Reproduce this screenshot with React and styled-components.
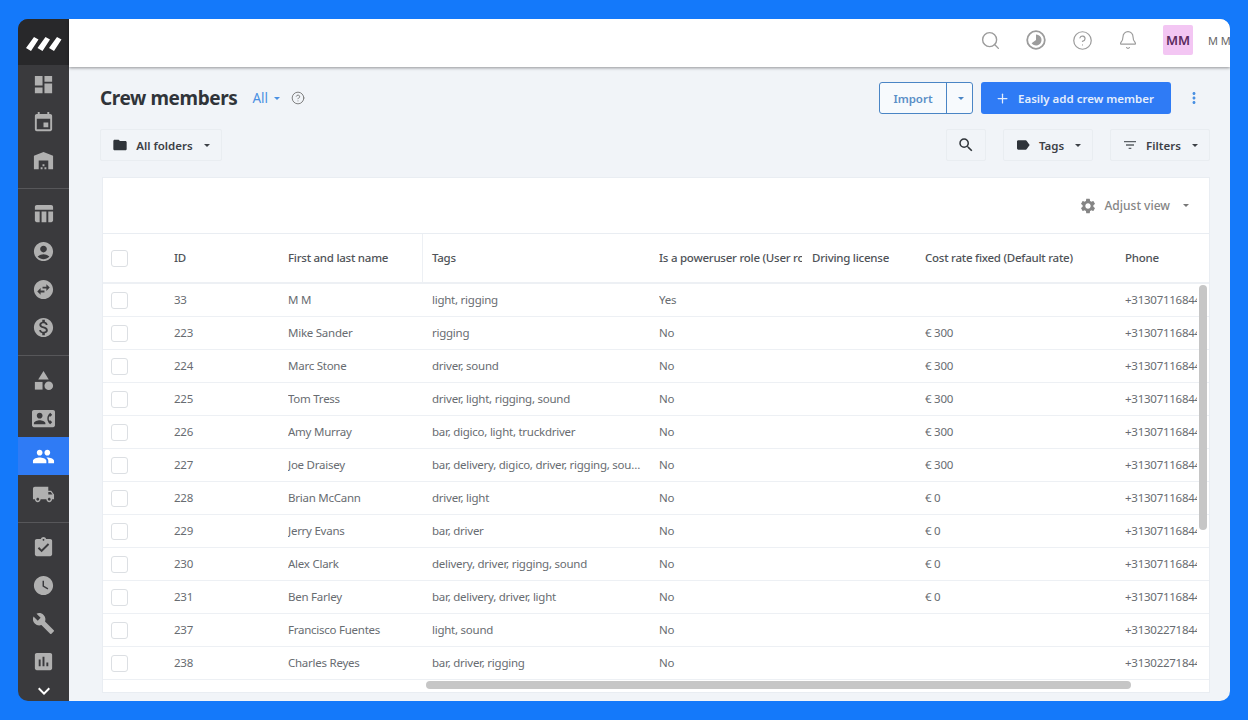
import React from 'react';
import styled, { createGlobalStyle } from 'styled-components';
import {
  MdDashboard, MdEvent, MdWarehouse, MdTableChart, MdAccountCircle, MdSwapHorizontalCircle,
  MdMonetizationOn, MdCategory, MdContactPhone, MdPeople, MdLocalShipping, MdAssignmentTurnedIn,
  MdWatchLater, MdBuild, MdAssessment, MdExpandMore, MdFolder, MdLabel, MdFilterList, MdSettings,
  MdMoreVert, MdSearch,
} from 'react-icons/md';
import { Search, CircleHelp, Bell, Plus } from 'lucide-react';

const navGroups = [
  [[MdDashboard], [MdEvent], [MdWarehouse]],
  [[MdTableChart], [MdAccountCircle], [MdSwapHorizontalCircle], [MdMonetizationOn]],
  [[MdCategory], [MdContactPhone], [MdPeople, true], [MdLocalShipping]],
  [[MdAssignmentTurnedIn], [MdWatchLater], [MdBuild], [MdAssessment]],
];

const P1 = '+31307116844';
const P2 = '+31302271844';
const rows = [
  ['33', 'M M', 'light, rigging', 'Yes', '', P1],
  ['223', 'Mike Sander', 'rigging', 'No', '€ 300', P1],
  ['224', 'Marc Stone', 'driver, sound', 'No', '€ 300', P1],
  ['225', 'Tom Tress', 'driver, light, rigging, sound', 'No', '€ 300', P1],
  ['226', 'Amy Murray', 'bar, digico, light, truckdriver', 'No', '€ 300', P1],
  ['227', 'Joe Draisey', 'bar, delivery, digico, driver, rigging, sound', 'No', '€ 300', P1],
  ['228', 'Brian McCann', 'driver, light', 'No', '€ 0', P1],
  ['229', 'Jerry Evans', 'bar, driver', 'No', '€ 0', P1],
  ['230', 'Alex Clark', 'delivery, driver, rigging, sound', 'No', '€ 0', P1],
  ['231', 'Ben Farley', 'bar, delivery, driver, light', 'No', '€ 0', P1],
  ['237', 'Francisco Fuentes', 'light, sound', 'No', '', P2],
  ['238', 'Charles Reyes', 'bar, driver, rigging', 'No', '', P2],
];

function App() {
  return (
    <>
      <Global />
      <Frame>
        <Sidebar>
          <Logo>
            <svg width="36" height="14" viewBox="0 0 36 14">
              <path d="M0 11L8 0l4.500 2.500L5 14zM11.500 11L19.500 0l4.500 2.500L16.500 14zM23 11L31 0l4.500 2.500L28 14z" fill="#fff" />
            </svg>
          </Logo>
          {navGroups.map((group, i) => (
            <NavGroup key={i}>
              {group.map(([Icon, active], j) => (
                <NavItem key={j} $active={active}><Icon size={23} /></NavItem>
              ))}
            </NavGroup>
          ))}
          <More><MdExpandMore size={24} /></More>
        </Sidebar>
        <Main>
          <TopBar>
            <TopIcon><Search size={21} strokeWidth={1.6} /></TopIcon>
            <TopIcon>
              <svg width="20" height="20" viewBox="0 0 20 20">
                <circle cx="10" cy="10" r="8.8" fill="none" stroke="#9c9c9c" strokeWidth="1.8" />
                <path d="M10 4.500a5.500 5.500 0 1 1 -4.400 8.800l4.400-3.300z" fill="#9c9c9c" />
              </svg>
            </TopIcon>
            <TopIcon><CircleHelp size={21} strokeWidth={1.4} /></TopIcon>
            <TopIcon><Bell size={20} strokeWidth={1.4} /></TopIcon>
            <Avatar>MM</Avatar>
            <UserName>M M</UserName>
          </TopBar>
          <Content>
            <TitleRow>
              <Title>Crew members</Title>
              <AllLink>All<Caret $color="#4a90e2" /></AllLink>
              <HelpMark><CircleHelp size={14} strokeWidth={1.6} /></HelpMark>
              <Spacer />
              <ImportGroup>
                <ImportMain>Import</ImportMain>
                <ImportDrop><Caret $color="#4a85c5" /></ImportDrop>
              </ImportGroup>
              <AddButton><Plus size={15} strokeWidth={2} />Easily add crew member</AddButton>
              <Kebab><MdMoreVert size={18} /></Kebab>
            </TitleRow>
            <FilterRow>
              <FilterButton $w={122}><MdFolder size={16} color="#2f343a" />All folders<Caret /></FilterButton>
              <Spacer />
              <FilterButton $w={40}><MdSearch size={18} color="#2f343a" /></FilterButton>
              <FilterButton $w={90} $ml={17}><MdLabel size={16} color="#2f343a" />Tags<Caret /></FilterButton>
              <FilterButton $w={100} $ml={17}><MdFilterList size={16} color="#5c6166" />Filters<Caret /></FilterButton>
            </FilterRow>
            <Panel>
              <PanelBar>
                <AdjustView><MdSettings size={18} />Adjust view<Caret $color="#777" $ml={6} /></AdjustView>
              </PanelBar>
              <HeadRow>
                <CheckCell><Check /></CheckCell>
                <Cell>ID</Cell>
                <Cell>First and last name</Cell>
                <HeadTags>Tags</HeadTags>
                <Cell>Is a poweruser role (User role)</Cell>
                <Cell>Driving license</Cell>
                <Cell>Cost rate fixed (Default rate)</Cell>
                <Cell>Phone</Cell>
              </HeadRow>
              <Body>
                {rows.map((r) => (
                  <Row key={r[0]}>
                    <CheckCell><Check /></CheckCell>
                    <Cell>{r[0]}</Cell>
                    <Cell>{r[1]}</Cell>
                    <TagsCell>{r[2]}</TagsCell>
                    <Cell>{r[3]}</Cell>
                    <Cell />
                    <Cell>{r[4]}</Cell>
                    <Cell>{r[5]}</Cell>
                  </Row>
                ))}
              </Body>
              <VScroll />
              <HScroll />
            </Panel>
          </Content>
        </Main>
      </Frame>
    </>
  );
}

const Global = createGlobalStyle`
  html, body {
    margin: 0;
    background: #1479fa;
  }
  * {
    box-sizing: border-box;
  }
`;
const Frame = styled.div`
  display: flex;
  width: 1212px;
  height: 682px;
  margin: 19px 18px;
  border-radius: 10px;
  overflow: hidden;
  font-family: "Noto Sans", sans-serif;
`;
const Sidebar = styled.nav`
  width: 51px;
  flex: none;
  display: flex;
  flex-direction: column;
  background: #3a3a3d;
  overflow: hidden;
`;
const Logo = styled.div`
  height: 46px;
  flex: none;
  display: flex;
  align-items: center;
  justify-content: center;
  padding-top: 3px;
  background: #28282a;
`;
const NavGroup = styled.div`
  flex: none;
  padding: 5px 0 9px;
  border-bottom: 1px solid #57575a;
  &:nth-of-type(2) {
    padding-top: 0;
  }
  &:nth-of-type(5) {
    border-bottom: 0;
    padding-bottom: 0;
  }
`;
const NavItem = styled.div`
  height: 38px;
  display: flex;
  align-items: center;
  justify-content: center;
  background: ${(p) => (p.$active ? '#2f7bf5' : 'transparent')};
  color: ${(p) => (p.$active ? '#fff' : '#b0b0b0')};
`;
const More = styled.div`
  height: 21px;
  flex: none;
  display: flex;
  align-items: center;
  justify-content: center;
  color: #fff;
  margin-top: auto;
`;
const Main = styled.div`
  flex: 1;
  min-width: 0;
  display: flex;
  flex-direction: column;
  background: #f1f4f8;
`;
const TopBar = styled.header`
  height: 48px;
  flex: none;
  display: flex;
  align-items: center;
  justify-content: flex-end;
  padding-bottom: 6px;
  background: #fff;
  box-shadow: 0 1px 3px rgba(0, 0, 0, 0.4);
  position: relative;
  overflow: hidden;
`;
const TopIcon = styled.div`
  width: 46px;
  display: flex;
  justify-content: center;
  color: #9c9c9c;
`;
const Avatar = styled.div`
  width: 30px;
  height: 30px;
  margin-left: 12px;
  display: flex;
  align-items: center;
  justify-content: center;
  background: #f3c6f3;
  color: #5b2a5e;
  font-size: 13px;
  font-weight: 600;
  border-radius: 2px;
`;
const UserName = styled.div`
  width: 37px;
  flex: none;
  padding-left: 15px;
  font-size: 11px;
  color: #666;
  white-space: nowrap;
`;
const Content = styled.main`
  flex: 1;
  min-height: 0;
  display: flex;
  flex-direction: column;
  padding: 15px 20px 8px 31px;
`;
const TitleRow = styled.div`
  display: flex;
  align-items: center;
  height: 32px;
  flex: none;
`;
const Title = styled.h1`
  margin: 0;
  font-size: 19px;
  font-weight: 700;
  color: #30343a;
  letter-spacing: -0.4px;
`;
const AllLink = styled.span`
  margin-left: 15px;
  display: flex;
  align-items: center;
  gap: 3px;
  font-size: 13.5px;
  color: #4a90e2;
`;
const HelpMark = styled.span`
  margin-left: 11px;
  display: flex;
  color: #777;
`;
const Spacer = styled.div`
  flex: 1;
`;
const ImportGroup = styled.div`
  display: flex;
  height: 32px;
  border: 1px solid #4a85c5;
  border-radius: 3px;
  background: #f7fafd;
  font-size: 11.5px;
  font-weight: 600;
  color: #5a8fc7;
`;
const ImportMain = styled.div`
  width: 67px;
  display: flex;
  align-items: center;
  justify-content: center;
  border-right: 1px solid #4a85c5;
`;
const ImportDrop = styled.div`
  width: 25px;
  display: flex;
  align-items: center;
  justify-content: center;
`;
const AddButton = styled.div`
  width: 190px;
  height: 32px;
  margin-left: 8px;
  padding-left: 14px;
  display: flex;
  align-items: center;
  gap: 8px;
  background: #2f7bf5;
  border-radius: 3px;
  color: #e4eefc;
  font-size: 11.5px;
  font-weight: 600;
`;
const Kebab = styled.div`
  width: 30px;
  margin-left: 8px;
  margin-right: 1px;
  display: flex;
  justify-content: center;
  color: #4a90e2;
`;
const FilterRow = styled.div`
  display: flex;
  align-items: center;
  margin-top: 15px;
  height: 32px;
  flex: none;
`;
const FilterButton = styled.div`
  width: ${(p) => p.$w}px;
  height: 32px;
  margin-left: ${(p) => p.$ml || 0}px;
  display: flex;
  align-items: center;
  justify-content: center;
  gap: 8px;
  border: 1px solid #e9edf1;
  border-radius: 2px;
  color: #3c4046;
  font-size: 11.5px;
  font-weight: 600;
`;
const Caret = styled.i`
  width: 0;
  height: 0;
  margin-left: ${(p) => p.$ml || 3}px;
  border-left: 3px solid transparent;
  border-right: 3px solid transparent;
  border-top: 3px solid ${(p) => p.$color || '#3c4046'};
`;
const Panel = styled.section`
  position: relative;
  flex: 1;
  min-height: 0;
  margin: 16px 0 0 2px;
  background: #fff;
  border: 1px solid #e9edf2;
  overflow: hidden;
`;
const PanelBar = styled.div`
  height: 56px;
  display: flex;
  justify-content: flex-end;
  align-items: center;
  padding-right: 20px;
  border-bottom: 1px solid #e9edf2;
`;
const AdjustView = styled.div`
  display: flex;
  align-items: center;
  gap: 7px;
  font-size: 12px;
  font-weight: 500;
  color: #858585;
`;
const columns = '71px 114px 144px 227px 153px 113px 200px 72px';
const HeadRow = styled.div`
  display: grid;
  grid-template-columns: ${columns};
  height: 50px;
  align-items: stretch;
  border-bottom: 2px solid #edf0f4;
  font-size: 11.5px;
  font-weight: 500;
  color: #4f5358;
  letter-spacing: -0.25px;
`;
const Body = styled.div`
  overflow: hidden;
`;
const Row = styled.div`
  display: grid;
  grid-template-columns: ${columns};
  height: 33px;
  align-items: stretch;
  border-bottom: 1px solid #edf0f4;
  font-size: 11.5px;
  color: #686c71;
  letter-spacing: -0.25px;
`;
const Cell = styled.div`
  align-self: center;
  margin-right: 10px;
  margin-bottom: 2px;
  white-space: nowrap;
  overflow: hidden;
  &:last-child {
    margin-right: 0;
  }
`;
const TagsCell = styled(Cell)`
  margin-right: 16px;
  text-overflow: ellipsis;
`;
const HeadTags = styled.div`
  display: flex;
  align-items: center;
  margin-left: -10px;
  padding-left: 9px;
  padding-bottom: 2px;
  border-left: 1px solid #edf0f4;
`;
const CheckCell = styled.div`
  display: flex;
  align-items: center;
  padding-left: 8px;
`;
const Check = styled.div`
  width: 17px;
  height: 17px;
  border: 1.5px solid #dcdfe3;
  border-radius: 3px;
  background: #fff;
`;
const VScroll = styled.div`
  position: absolute;
  top: 107px;
  right: 2px;
  width: 8px;
  height: 245px;
  border-radius: 4px;
  background: #c6c6c6;
`;
const HScroll = styled.div`
  position: absolute;
  bottom: 3px;
  left: 323px;
  width: 705px;
  height: 8px;
  border-radius: 4px;
  background: #c6c6c6;
`;

export default App;
